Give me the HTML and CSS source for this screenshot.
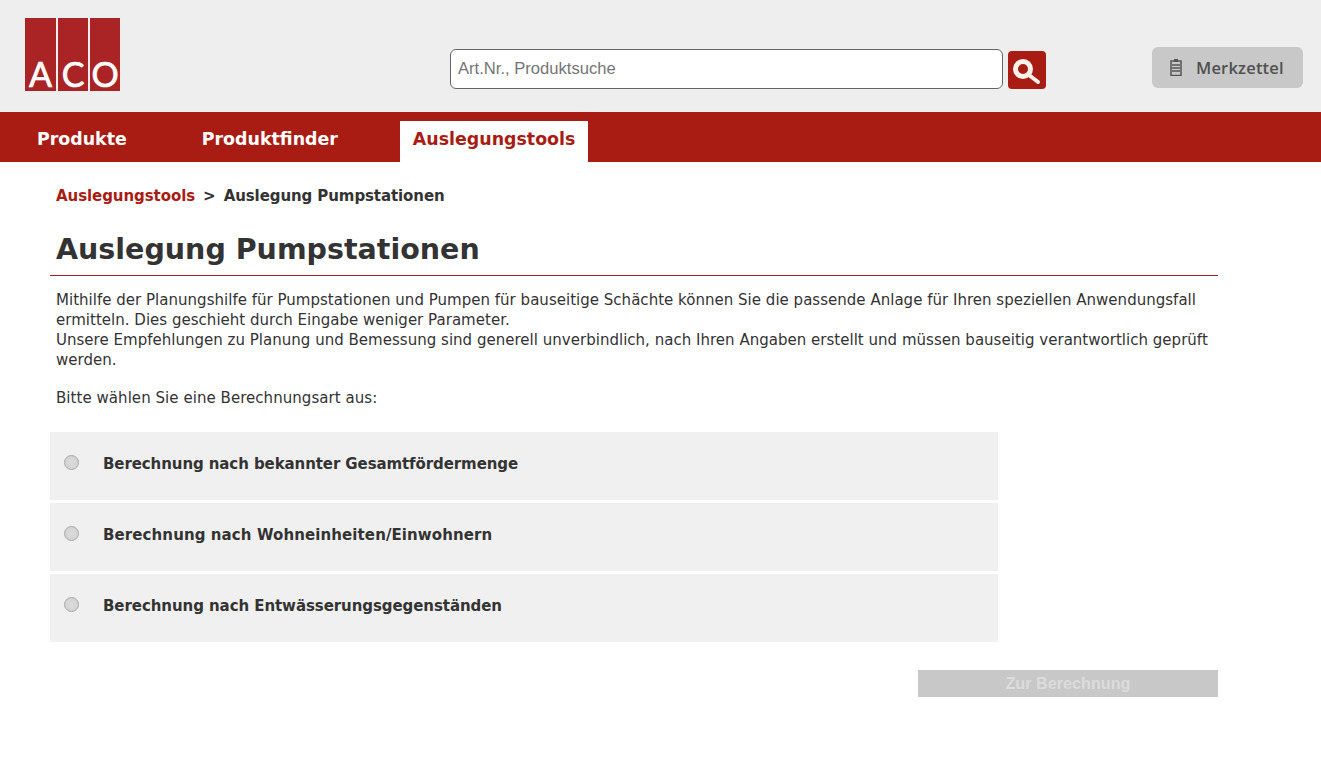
FILE: index.html
```html
<!DOCTYPE html>
<html lang="de">
<head>
<meta charset="utf-8">
<title>Auslegung Pumpstationen</title>
<link rel="stylesheet" href="styles.css">
</head>
<body>
<header class="top">
  <svg class="logo" width="96" height="90" viewBox="0 0 96 90" aria-label="ACO">
    <rect x="0" y="0" width="31" height="73" fill="#ab2425"/>
    <rect x="33" y="0" width="30" height="73" fill="#ab2425"/>
    <rect x="65" y="0" width="30" height="73" fill="#ab2425"/>
    <text x="15.5" y="69" class="logo-t" text-anchor="middle">A</text>
    <text x="48" y="69" class="logo-t" text-anchor="middle">C</text>
    <text x="80" y="69" class="logo-t" text-anchor="middle">O</text>
  </svg>
  <div class="search">
    <input class="search-input" type="text" placeholder="Art.Nr., Produktsuche">
    <button class="search-btn" aria-label="Suche">
      <svg width="38" height="38" viewBox="0 0 38 38">
        <circle cx="15" cy="18" r="7.500" fill="none" stroke="#fdf3ea" stroke-width="5"/>
        <path d="M21 24 L30 31" stroke="#fdf3ea" stroke-width="4" stroke-linecap="round"/>
      </svg>
    </button>
  </div>
  <button class="memo">
    <svg width="12" height="17" viewBox="0 0 12 17">
      <rect x="4" y="0" width="4" height="3" fill="#555"/>
      <rect x="1" y="2" width="10" height="14.500" fill="none" stroke="#555" stroke-width="1.500"/>
      <path stroke="#555" stroke-width="1.300" d="M2 6h8M2 9h8M2 12h8"/>
    </svg>
    <span>Merkzettel</span>
  </button>
</header>
<nav class="nav">
  <a class="nav-item nav-1">Produkte</a>
  <a class="nav-item nav-2">Produktfinder</a>
  <a class="nav-item nav-active">Auslegungstools</a>
</nav>
<main class="main">
  <div class="crumbs"><a class="crumb-link">Auslegungstools</a><span class="crumb-sep">&gt;</span><span class="crumb-cur">Auslegung Pumpstationen</span></div>
  <h1 class="title">Auslegung Pumpstationen</h1>
  <p class="intro">Mithilfe der Planungshilfe für Pumpstationen und Pumpen für bauseitige Schächte können Sie die passende Anlage für Ihren speziellen Anwendungsfall ermitteln. Dies geschieht durch Eingabe weniger Parameter.<br>Unsere Empfehlungen zu Planung und Bemessung sind generell unverbindlich, nach Ihren Angaben erstellt und müssen bauseitig verantwortlich geprüft werden.</p>
  <p class="prompt">Bitte wählen Sie eine Berechnungsart aus:</p>
  <div class="options">
    <label class="option opt-a"><span class="radio"></span><span>Berechnung nach bekannter Gesamtfördermenge</span></label>
    <label class="option opt-b"><span class="radio"></span><span>Berechnung nach Wohneinheiten/Einwohnern</span></label>
    <label class="option opt-c"><span class="radio"></span><span>Berechnung nach Entwässerungsgegenständen</span></label>
  </div>
  <div class="actions"><button class="submit">Zur Berechnung</button></div>
</main>
</body>
</html>
```
FILE: styles.css
```css
* { box-sizing: border-box; }
html, body { margin: 0; padding: 0; }
body { background: #fff; color: #333; font-family: "DejaVu Sans", Verdana, sans-serif; height: 769px; overflow: hidden; }
.top { height: 112px; background: #eeeeee; display: flex; align-items: flex-start; }
.logo { margin: 18px 0 0 25px; flex: none; }
.logo-t { font-family: "Lato", "Liberation Sans", sans-serif; font-size: 34px; fill: #fff; stroke: #fff; stroke-width: .7px; }
.search { display: flex; align-items: flex-start; margin: 49px 0 0 329px; }
.search-input { width: 553px; height: 40px; border: 1px solid #666; border-radius: 6px; background: #fff; padding: 0 7px; font: 16.600px "Liberation Sans", Arial, sans-serif; color: #333; outline: none; }
.search-input::placeholder { color: #757575; opacity: 1; }
.search-btn { width: 38px; height: 38px; margin: 2px 0 0 5px; padding: 0; border: 0; border-radius: 4px; background: #a91c13; display: block; }
.search-btn svg { display: block; }
.memo { width: 151px; height: 41px; margin: 47px 0 0 106px; border: 0; border-radius: 6px; background: #c8c8c8; color: #505050; display: flex; align-items: center; padding: 0 0 0 18px; font: 600 16.500px "Open Sans", "Noto Sans", sans-serif; letter-spacing: .2px; gap: 14px; }
.nav { height: 50px; background: #a91c13; display: flex; align-items: flex-end; }
.nav-item { color: #fff; font-weight: 700; font-size: 17.400px; height: 41px; display: flex; align-items: center; padding-bottom: 5px; }
.nav-1 { margin-left: 37px; }
.nav-2 { margin-left: 75px; }
.nav-active { margin-left: 62px; background: #fff; color: #a91c13; padding: 0 13px 5px; }
.main { width: 1168px; margin-left: 50px; }
.crumbs { padding: 25px 0 0 6px; height: 62px; font-size: 15px; font-weight: 700; line-height: 18px; }
.crumb-link { color: #a91c13; letter-spacing: -.07px; }
.crumb-cur { letter-spacing: -.09px; }
.crumb-sep { margin: 0 8px; }
.title { margin: 0; padding: 6px 6px 0; height: 52px; font-size: 28.500px; line-height: 40px; font-weight: 700; border-bottom: 1px solid #a02020; }
.intro { margin: 14px 0 0; padding: 0 6px; font-size: 15px; line-height: 20px; letter-spacing: .02px; }
.prompt { margin: 18px 0 0; padding: 0 6px; font-size: 15px; line-height: 20px; letter-spacing: .05px; }
.options { margin-top: 24px; width: 948px; display: flex; flex-direction: column; gap: 3px; }
.option { height: 68px; background: #f0f0f0; display: flex; align-items: center; padding: 0 0 5px 14px; font-weight: 700; font-size: 15px; }
.opt-a { letter-spacing: -.09px; }
.opt-b { letter-spacing: .1px; }
.opt-c { letter-spacing: -.07px; }
.radio { width: 15px; height: 15px; border-radius: 50%; background: radial-gradient(circle at 50% 50%, #dcdcdc, #d0d0d0); border: 1px solid #a8a8a8; margin: -3px 24px 0 0; flex: none; }
.actions { display: flex; justify-content: flex-end; margin-top: 28px; }
.submit { width: 300px; height: 27px; border: 0; padding: 0; background: #c8c8c8; color: #dcdcdc; font: 700 16.200px "Liberation Sans", Arial, sans-serif; }
```
